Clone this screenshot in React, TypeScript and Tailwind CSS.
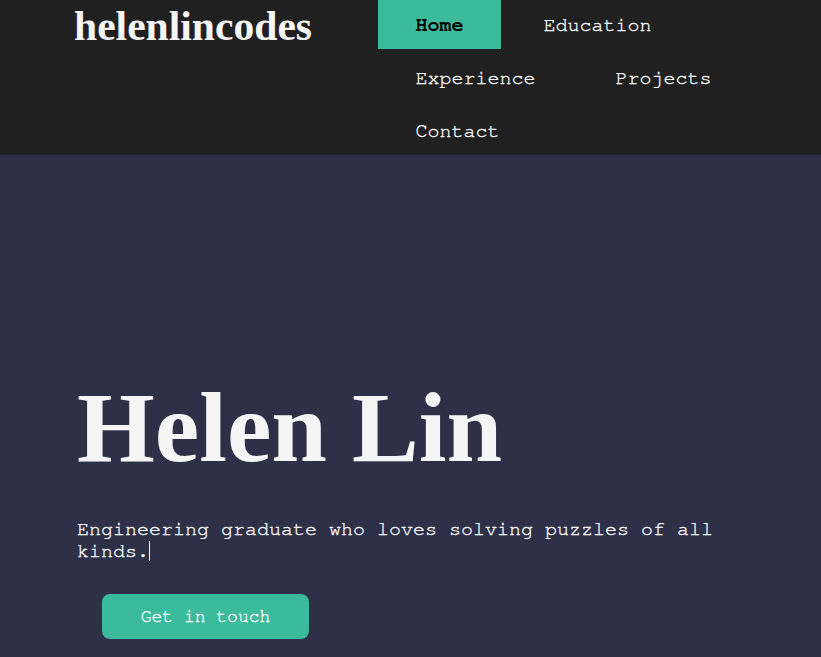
import React from "react";

const navItems = ["Home", "Education", "Experience", "Projects", "Contact"];

export default function App() {
  return (
    <div className="min-h-screen bg-[#2e3047]">
      <header className="flex h-[155px] bg-[#202020]">
        <div className="w-[378px] shrink-0 pl-[74px] pt-[2px]">
          <div className="font-['Liberation_Serif','Times_New_Roman',serif] text-[41.6px] font-bold leading-[normal] text-[#f5f5f5]">
            helenlincodes
          </div>
        </div>
        <nav className="flex-1 pr-[40px]">
          <ul className="flex flex-wrap gap-x-[5px] gap-y-[4px] font-['Nimbus_Mono_PS','Nimbus_Mono_L','FreeMono','Courier_10_Pitch','Liberation_Mono',monospace] text-[20px] leading-[22.66px]">
            {navItems.map((item) => (
              <li
                key={item}
                className={
                  item === "Home"
                    ? "flex h-[49px] items-center bg-[#3bba9c] px-[37.5px] pt-[1px] font-bold text-[#000000]"
                    : "flex h-[49px] items-center px-[37.5px] pt-[1px] text-[#ffffff] [-webkit-text-stroke:0.3px_#ffffff]"
                }
              >
                {item}
              </li>
            ))}
          </ul>
        </nav>
      </header>
      <section className="pl-[77px] pt-[215px] pb-[80px]">
        <h1 className="font-['Liberation_Serif','Times_New_Roman',serif] text-[100px] font-bold leading-[normal] text-[#f5f5f5]">
          Helen Lin
        </h1>
        <p className="mt-[32.5px] w-[660px] font-['Nimbus_Mono_PS','Nimbus_Mono_L','FreeMono','Courier_10_Pitch','Liberation_Mono',monospace] text-[20px] leading-[22.66px] text-[#ffffff] [-webkit-text-stroke:0.3px_#ffffff]">
          <span className="border-r border-[#f5f5f5]">
            Engineering graduate who loves solving puzzles of all kinds.
          </span>
        </p>
        <button className="ml-[25px] mt-[31.5px] flex h-[45px] w-[207px] items-center justify-center rounded-[8px] bg-[#3bba9c] pt-[1px] font-['Nimbus_Mono_PS','Nimbus_Mono_L','FreeMono','Courier_10_Pitch','Liberation_Mono',monospace] text-[18px] leading-[20px] text-[#ffffff] [-webkit-text-stroke:0.3px_#ffffff]">
          Get in touch
        </button>
      </section>
    </div>
  );
}
